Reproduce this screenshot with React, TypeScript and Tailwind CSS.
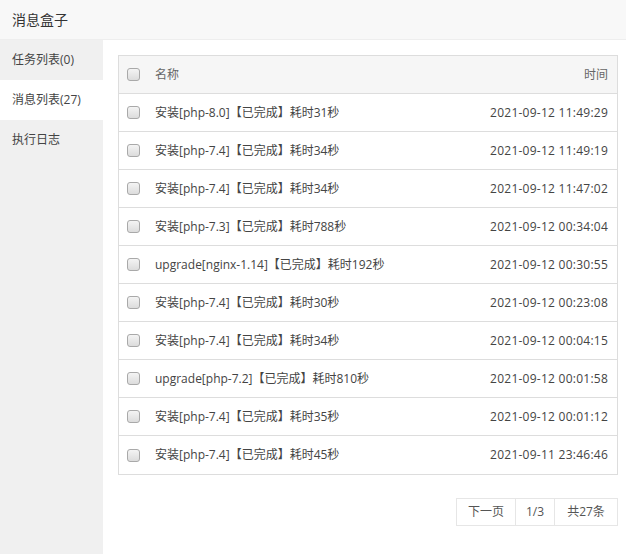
import React from 'react'

interface Msg {
  name: string
  time: string
}

const msgs: Msg[] = [
  { name: '安装[php-8.0]【已完成】耗时31秒', time: '2021-09-12 11:49:29' },
  { name: '安装[php-7.4]【已完成】耗时34秒', time: '2021-09-12 11:49:19' },
  { name: '安装[php-7.4]【已完成】耗时34秒', time: '2021-09-12 11:47:02' },
  { name: '安装[php-7.3]【已完成】耗时788秒', time: '2021-09-12 00:34:04' },
  { name: 'upgrade[nginx-1.14]【已完成】耗时192秒', time: '2021-09-12 00:30:55' },
  { name: '安装[php-7.4]【已完成】耗时30秒', time: '2021-09-12 00:23:08' },
  { name: '安装[php-7.4]【已完成】耗时34秒', time: '2021-09-12 00:04:15' },
  { name: 'upgrade[php-7.2]【已完成】耗时810秒', time: '2021-09-12 00:01:58' },
  { name: '安装[php-7.4]【已完成】耗时35秒', time: '2021-09-12 00:01:12' },
  { name: '安装[php-7.4]【已完成】耗时45秒', time: '2021-09-11 23:46:46' },
]

const tabs = ['任务列表(0)', '消息列表(27)', '执行日志']

function Check() {
  return (
    <span className="block w-[13px] h-[13px] rounded-[3px] border border-[#a9a9a9] bg-gradient-to-b from-[#f4f4f4] to-[#dcdcdc]" />
  )
}

function App() {
  return (
    <div
      className="w-[626px] h-[554px] bg-white flex flex-col text-[12px] text-[#444]"
      style={{ fontFamily: '"Open Sans", "Noto Sans CJK SC", sans-serif' }}
    >
      <div className="h-[40px] shrink-0 bg-[#f8f8f8] border-b border-[#eee] flex items-center px-[12px] text-[14px] text-[#333]">
        消息盒子
      </div>
      <div className="flex flex-1 min-h-0">
        <div className="w-[103px] shrink-0 bg-[#f0f0f0]">
          {tabs.map((t, i) => (
            <div
              key={t}
              className={
                'h-[40px] flex items-center pl-[12px] text-[12px] text-[#444] ' + (i === 1 ? 'bg-white' : '')
              }
            >
              {t}
            </div>
          ))}
        </div>
        <div className="flex-1 pt-[15px] pl-[15px] pr-[8px]">
          <div className="border border-[#ddd]">
            <div className="h-[38px] bg-[#f6f6f6] flex items-center border-b border-[#ddd]">
              <div className="w-[36px] pl-[8px]">
                <Check />
              </div>
              <div className="flex-1 text-[#666]">名称</div>
              <div className="pr-[9px] text-[#666]">时间</div>
            </div>
            {msgs.map((m, i) => (
              <div
                key={i}
                className={
                  'h-[38px] flex items-center ' + (i < msgs.length - 1 ? 'border-b border-[#ddd]' : '')
                }
              >
                <div className="w-[36px] pl-[8px]">
                  <Check />
                </div>
                <div className="flex-1">{m.name}</div>
                <div className="pr-[9px] tracking-[0.25px]">{m.time}</div>
              </div>
            ))}
          </div>
          <div className="flex justify-end mt-[23px]">
            <div className="flex h-[28px] border border-[#e6e6e6] text-[#555]">
              <span className="w-[59px] flex items-center justify-center border-r border-[#e6e6e6]">下一页</span>
              <span className="w-[39px] flex items-center justify-center border-r border-[#e6e6e6]">1/3</span>
              <span className="w-[62px] flex items-center justify-center">共27条</span>
            </div>
          </div>
        </div>
      </div>
    </div>
  )
}

export default App
